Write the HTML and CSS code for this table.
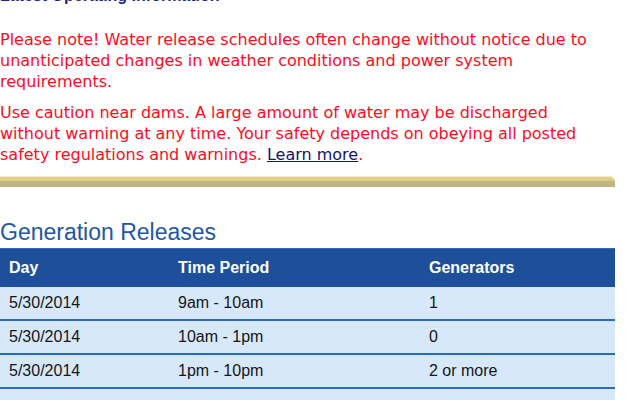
FILE: index.html
```html
<!DOCTYPE html>
<html>
<head>
<meta charset="utf-8">
<link rel="stylesheet" href="styles.css">
</head>
<body>
<div class="page">
  <h2 class="ops-title">Latest Operating Information</h2>
  <p class="notice">Please note! Water release schedules often change without notice due to unanticipated changes in weather conditions and power system requirements.</p>
  <p class="notice">Use caution near dams. A large amount of water may be discharged without warning at any time. Your safety depends on obeying all posted safety regulations and warnings. <a href="#" class="learn">Learn more</a>.</p>
  <div class="gold-bar"></div>
  <h3 class="gen-title">Generation Releases</h3>
  <table class="releases">
    <colgroup><col class="c1"><col class="c2"><col class="c3"></colgroup>
    <thead>
      <tr><th>Day</th><th>Time Period</th><th>Generators</th></tr>
    </thead>
    <tbody>
      <tr><td>5/30/2014</td><td>9am - 10am</td><td>1</td></tr>
      <tr><td>5/30/2014</td><td>10am - 1pm</td><td>0</td></tr>
      <tr><td>5/30/2014</td><td>1pm - 10pm</td><td>2 or more</td></tr>
      <tr><td>&nbsp;</td><td></td><td></td></tr>
    </tbody>
  </table>
</div>
</body>
</html>
```

FILE: styles.css
```css
html, body { margin: 0; padding: 0; background: #fff; overflow: hidden; }
.page { width: 615px; margin-top: -14px; }
.ops-title {
  font-family: "Liberation Sans", Arial, sans-serif;
  font-size: 16px;
  font-weight: bold;
  color: #23238c;
  margin: 0;
  line-height: 20px;
}
.notice {
  font-family: "DejaVu Sans", Verdana, sans-serif;
  font-size: 16px;
  line-height: 21px;
  color: #ff0a1e;
  margin: 0 0 10px 0;
  max-width: 600px;
}
.ops-title + .notice { margin-top: 23px; }
.learn { color: #13136e; text-decoration: underline; }
.gold-bar {
  height: 11px;
  margin-top: 11px;
  background: linear-gradient(#f3ebc8 0, #f3ebc8 1px, #e3d08f 1px, #e0cd8c 5px, #c2b985 5px, #bbb482 11px);
  clip-path: polygon(0 0, calc(100% - 4px) 0, 100% 4px, 100% 100%, 0 100%);
}
.gen-title {
  font-family: "Liberation Sans", Arial, sans-serif;
  font-weight: normal;
  font-size: 23px;
  color: #2356a4;
  margin: 30px 0 0 0;
  line-height: 30px;
}
.releases {
  width: 615px;
  table-layout: fixed;
  border-collapse: collapse;
  margin-top: 1px;
  font-family: "Liberation Sans", Arial, sans-serif;
  font-size: 16px;
}
.c1 { width: 169px; }
.c2 { width: 251px; }
.releases th {
  background: #1d4f9a;
  color: #fff;
  font-weight: bold;
  text-align: left;
  height: 38px;
  padding: 0 0 0 9px;
  border-top: 1px solid #3a68ac;
}
.releases td {
  background: #d7e8fb;
  color: #151515;
  height: 32px;
  padding: 0 0 0 9px;
  border-bottom: 2px solid #2a6cc2;
}
```
